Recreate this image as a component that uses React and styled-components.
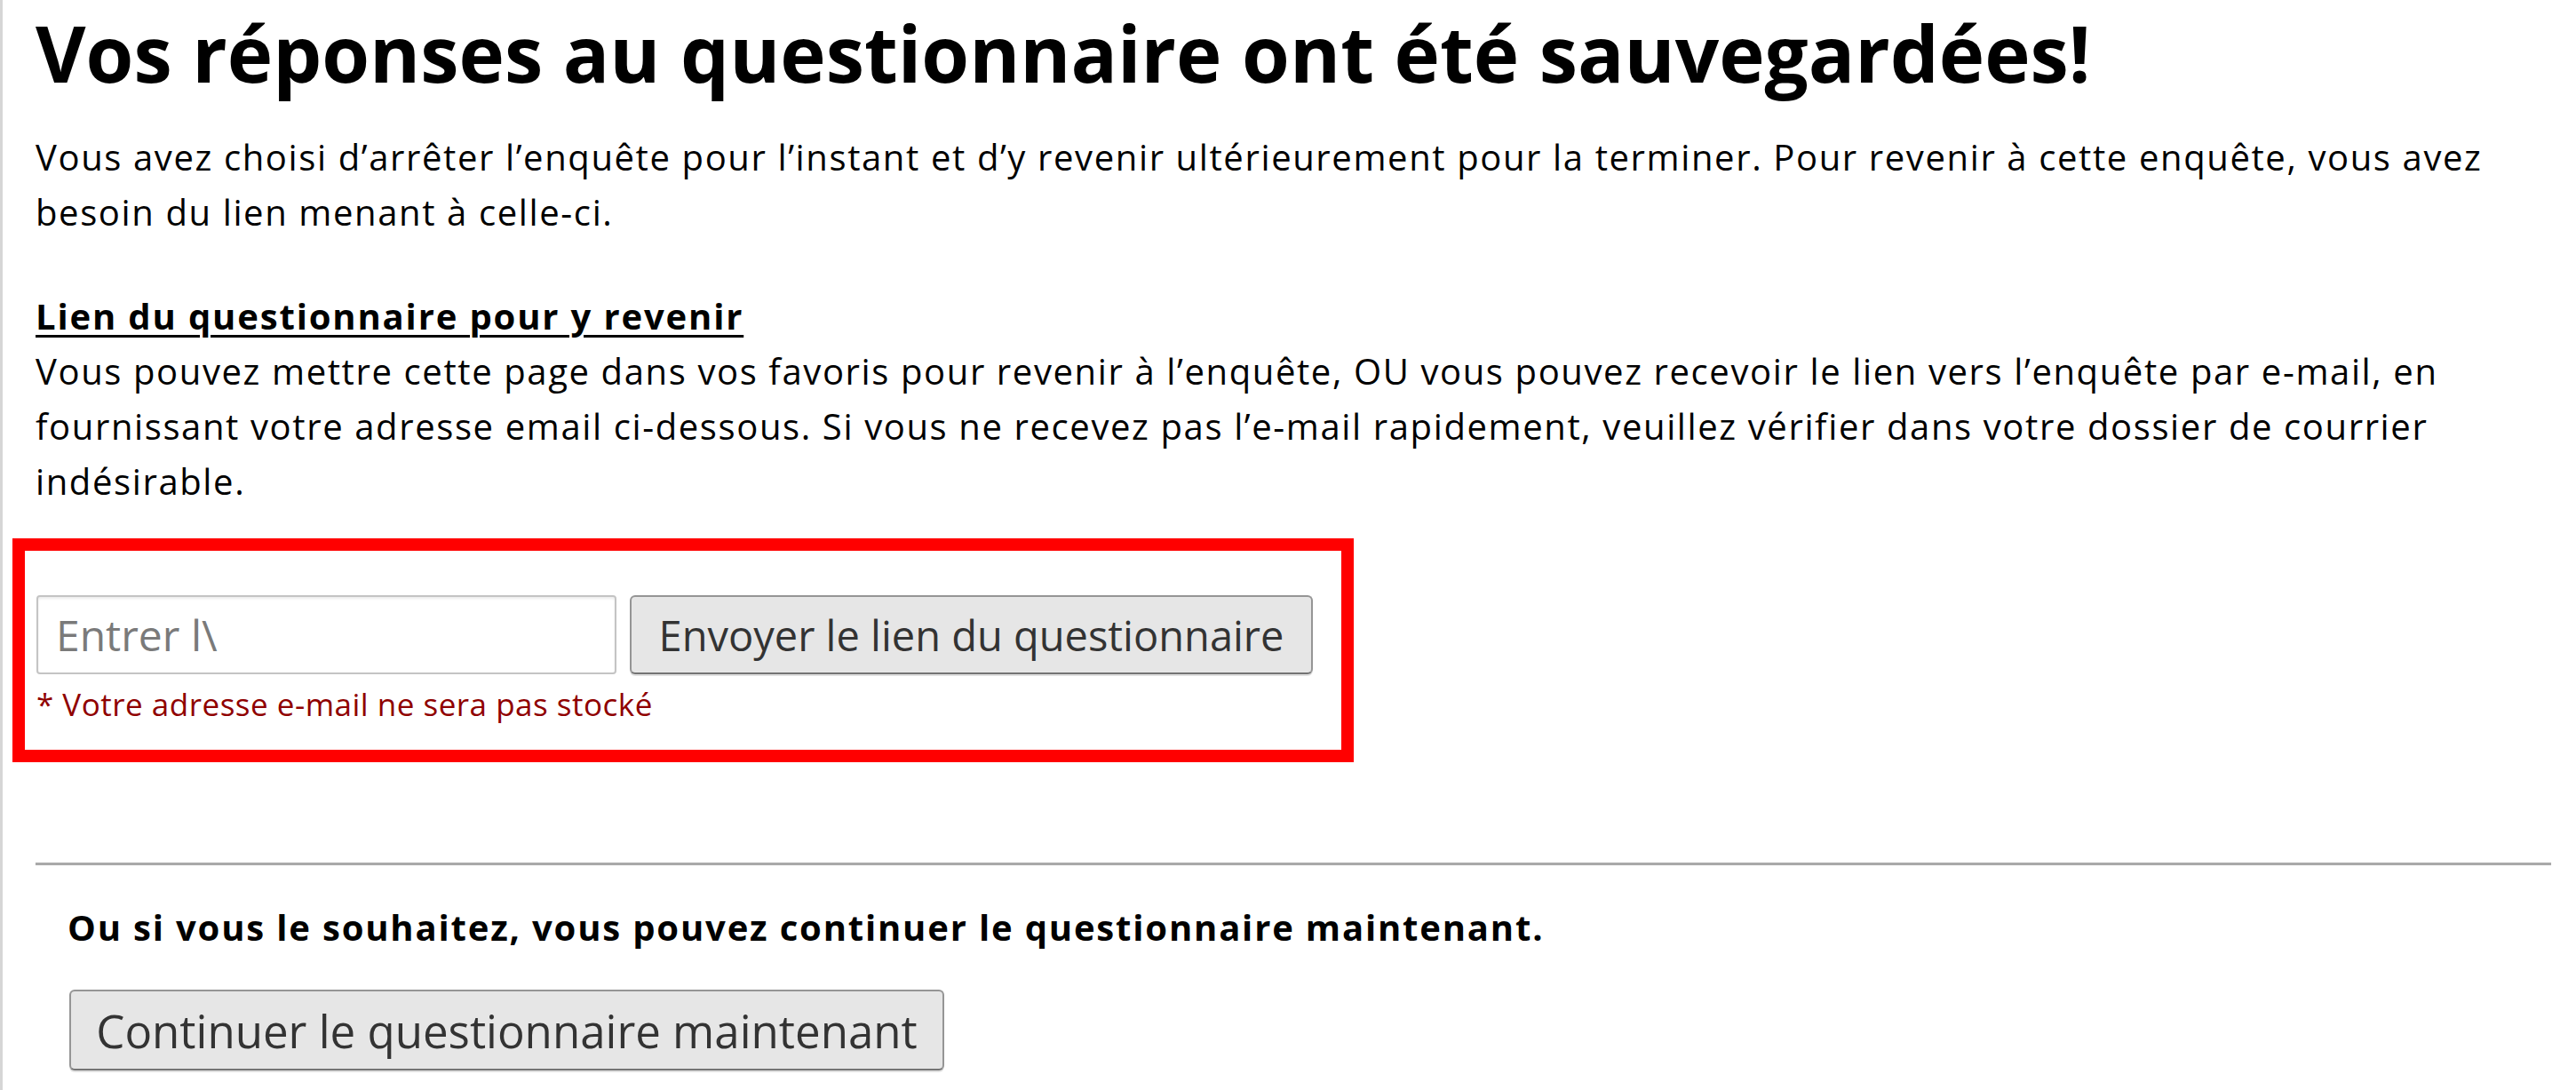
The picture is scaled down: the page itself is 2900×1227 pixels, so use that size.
import React from "react";
import styled, { createGlobalStyle } from "styled-components";

const GlobalStyle = createGlobalStyle`
  html, body {
    margin: 0;
    padding: 0;
    background: #ffffff;
  }
  body {
    font-family: "Open Sans", "Noto Sans", "Liberation Sans", sans-serif;
    color: #000000;
  }
  * { box-sizing: border-box; }
`;

const Page = styled.main`
  min-height: 100vh;
  border-left: 3px solid #d6d6d6;
  padding: 0 28px 0 37px;
  display: flex;
  flex-direction: column;
`;

const Title = styled.h1`
  margin: 11px 0 0;
  font-size: 87px;
  line-height: 97px;
  font-weight: 700;
  letter-spacing: 0;
`;

const Paragraph = styled.p`
  margin: ${(p) => p.$top || 0}px 0 0;
  font-size: 40px;
  line-height: 62px;
  font-weight: 400;
  letter-spacing: 1.62px;
`;

const SectionHeading = styled.h2`
  margin: 55px 0 0;
  font-size: 40px;
  line-height: 62px;
  font-weight: 700;
  letter-spacing: 1.85px;
  text-decoration: underline;
  text-decoration-thickness: 3px;
  text-underline-offset: 6px;
`;

const EmailBox = styled.section`
  margin: 33px 0 0 -26px;
  width: 1510px;
  border: 14px solid #ff0000;
  padding: 50px 13px 28px;
  display: flex;
  flex-direction: column;
`;

const InputRow = styled.div`
  display: flex;
  gap: 15px;
  align-items: stretch;
`;

const EmailInput = styled.input`
  width: 653px;
  height: 89px;
  border: 2px solid #c4c4c4;
  border-radius: 4px;
  box-shadow: inset 0 2px 3px rgba(0, 0, 0, 0.08);
  padding: 0 20px;
  font-family: inherit;
  font-size: 48px;
  color: #333;
  background: #fff;
  &::placeholder {
    color: #7a7a7a;
  }
`;

const Button = styled.button`
  width: ${(p) => p.$width}px;
  height: ${(p) => p.$height}px;
  padding: 0;
  font-family: inherit;
  font-size: ${(p) => p.$size}px;
  color: #333333;
  background: #e6e6e6;
  border: 2px solid #959595;
  border-bottom-color: #747474;
  border-radius: 6px;
  box-shadow: 0 2px 0 rgba(0, 0, 0, 0.12);
  text-align: center;
  white-space: nowrap;
  cursor: pointer;
`;

const Note = styled.p`
  margin: 10px 0 0;
  font-size: 35px;
  line-height: normal;
  letter-spacing: 0.5px;
  color: #8f0000;
`;

const Divider = styled.hr`
  margin: 113px 0 0;
  border: 0;
  height: 3px;
  background: #a9a9a9;
  box-shadow: 0 0 1px #cfcfcf;
`;

const ContinueSection = styled.section`
  padding-left: 36px;
  display: flex;
  flex-direction: column;
  align-items: flex-start;
`;

const ContinueText = styled.p`
  margin: 39px 0 0;
  font-size: 40px;
  line-height: 62px;
  font-weight: 700;
  letter-spacing: 1.83px;
`;

const ContinueButtonWrap = styled.div`
  margin: 39px 0 0 2px;
`;

export default function App() {
  return (
    <>
      <GlobalStyle />
      <Page>
        <Title>Vos réponses au questionnaire ont été sauvegardées!</Title>
        <Paragraph $top={38}>
          Vous avez choisi d’arrêter l’enquête pour l’instant et d’y revenir ultérieurement pour la
          terminer. Pour revenir à cette enquête, vous avez besoin du lien menant à celle-ci.
        </Paragraph>
        <SectionHeading>Lien du questionnaire pour y revenir</SectionHeading>
        <Paragraph>
          Vous pouvez mettre cette page dans vos favoris pour revenir à l’enquête, OU vous pouvez
          recevoir le lien vers l’enquête par e-mail, en fournissant votre adresse email ci-dessous.
          Si vous ne recevez pas l’e-mail rapidement, veuillez vérifier dans votre dossier de
          courrier indésirable.
        </Paragraph>
        <EmailBox>
          <InputRow>
            <EmailInput type="email" placeholder="Entrer l\" />
            <Button type="button" $width={769} $height={89} $size={47}>
              Envoyer le lien du questionnaire
            </Button>
          </InputRow>
          <Note>* Votre adresse e-mail ne sera pas stocké</Note>
        </EmailBox>
        <Divider />
        <ContinueSection>
          <ContinueText>
            Ou si vous le souhaitez, vous pouvez continuer le questionnaire maintenant.
          </ContinueText>
          <ContinueButtonWrap>
            <Button type="button" $width={985} $height={91} $size={51}>
              Continuer le questionnaire maintenant
            </Button>
          </ContinueButtonWrap>
        </ContinueSection>
      </Page>
    </>
  );
}
